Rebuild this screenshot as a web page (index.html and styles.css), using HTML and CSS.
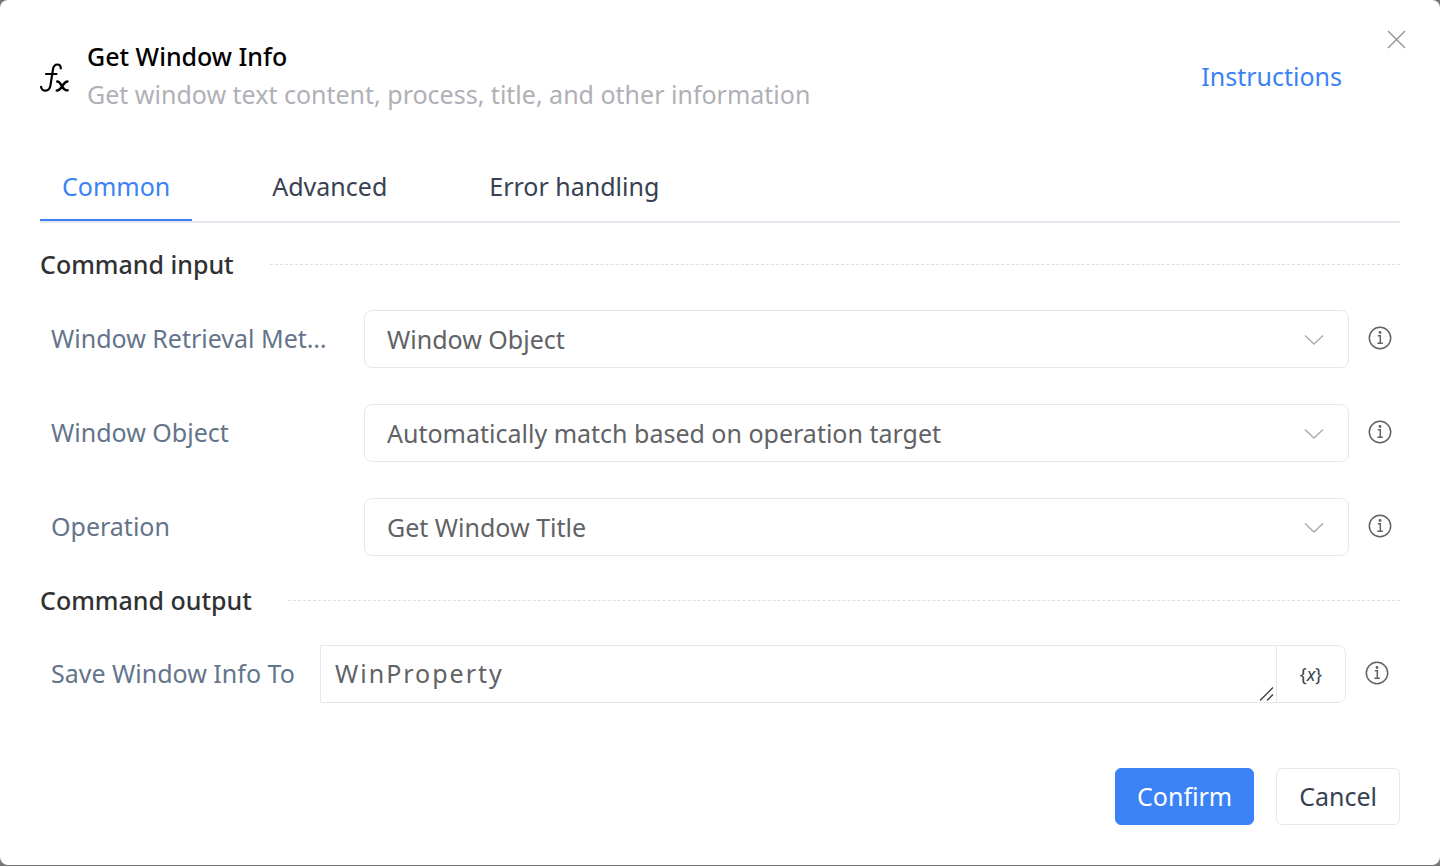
FILE: index.html
```html
<!DOCTYPE html>
<html lang="en">
<head>
<meta charset="utf-8">
<title>Get Window Info</title>
<link rel="stylesheet" href="styles.css">
</head>
<body>
<svg class="sprite" aria-hidden="true">
  <symbol id="info" viewBox="0 0 24 24">
    <g fill="none" stroke="currentColor" stroke-width="1.5">
      <circle cx="12" cy="12" r="10.7"/>
      <path d="M9.800 9.700h2.500v7.600M9.400 17.300h5.400"/>
    </g>
    <circle cx="12" cy="6.5" r="1.4" fill="currentColor"/>
  </symbol>
  <symbol id="chevron" viewBox="0 0 20 12">
    <path d="M1 1.5l9 8.5 9-8.5" fill="none" stroke="currentColor" stroke-width="1.4"/>
  </symbol>
</svg>
<main class="dialog">
  <header class="header">
    <svg class="fx" viewBox="0 0 30 30" aria-hidden="true">
      <g fill="none" stroke="currentColor" stroke-width="2.2" stroke-linecap="round" stroke-linejoin="round">
        <path d="M20.800 5.500c0-2.600-1.400-4-3.500-4-2.500 0-3.800 1.700-4.300 4.600l-2.400 15.500c-.6 4-2.300 6-5 6-2.300 0-4.100-1.300-4.500-3.800M6 11h10.500"/>
        <path d="M17.200 18.500c4.400-.3 4.600 9.500 10.300 8.800M27.400 18.600c-4.400 0-5.800 9.200-10.600 8.900" stroke-width="2.500"/>
      </g>
    </svg>
    <div class="heading">
      <h1 class="title">Get Window Info</h1>
      <p class="subtitle">Get window text content, process, title, and other information</p>
    </div>
    <a class="instructions" href="#">Instructions</a>
    <button class="close" type="button" aria-label="Close">
      <svg viewBox="0 0 20 20"><path d="M2 2l17 17M19 2L2 19" fill="none" stroke="currentColor" stroke-width="1.4"/></svg>
    </button>
  </header>

  <nav class="tabs" role="tablist">
    <button class="tab tab-active" type="button" role="tab" aria-selected="true">Common</button>
    <button class="tab" type="button" role="tab" aria-selected="false">Advanced</button>
    <button class="tab" type="button" role="tab" aria-selected="false">Error handling</button>
  </nav>

  <form class="form">
    <h2 class="section">Command input</h2>
    <div class="rows">
      <div class="row">
        <label class="label" for="method">Window Retrieval Method</label>
        <div class="picker">
          <select class="select" id="method"><option>Window Object</option></select>
          <svg class="chevron" aria-hidden="true"><use href="#chevron"/></svg>
        </div>
        <svg class="info"><use href="#info"/></svg>
      </div>
      <div class="row">
        <label class="label" for="object">Window Object</label>
        <div class="picker">
          <select class="select" id="object"><option>Automatically match based on operation target</option></select>
          <svg class="chevron" aria-hidden="true"><use href="#chevron"/></svg>
        </div>
        <svg class="info"><use href="#info"/></svg>
      </div>
      <div class="row">
        <label class="label" for="operation">Operation</label>
        <div class="picker">
          <select class="select" id="operation"><option>Get Window Title</option></select>
          <svg class="chevron" aria-hidden="true"><use href="#chevron"/></svg>
        </div>
        <svg class="info"><use href="#info"/></svg>
      </div>
    </div>
    <h2 class="section">Command output</h2>
    <div class="row row-output">
      <label class="label" for="output">Save Window Info To</label>
      <div class="variable">
        <div class="field">
          <textarea class="textarea" id="output" rows="1">WinProperty</textarea>
          <svg class="grip" viewBox="0 0 16 16" aria-hidden="true"><path d="M1 14.500L14 1.500M8 14.500l6-6" fill="none" stroke="currentColor" stroke-width="1.400"/></svg>
        </div>
        <button class="insert" type="button">{<i>x</i>}</button>
      </div>
      <svg class="info"><use href="#info"/></svg>
    </div>
    <footer class="footer">
      <button class="button button-primary" type="button">Confirm</button>
      <button class="button" type="button">Cancel</button>
    </footer>
  </form>
</main>
</body>
</html>
```
FILE: styles.css
```css
* {
  box-sizing: border-box;
}

body {
  margin: 0;
  min-height: 100vh;
  display: flex;
  padding-bottom: 1px;
  background: #767676;
  font-family: "Noto Sans", sans-serif;
  font-size: 25px;
  line-height: 38px;
  color: #374151;
}

button,
select,
textarea {
  font: inherit;
  color: inherit;
}

button {
  cursor: pointer;
}

.sprite {
  position: absolute;
  width: 0;
  height: 0;
}

.dialog {
  flex: 1;
  min-width: 0;
  padding: 37px 40px 40px;
  background: #fff;
  border-radius: 8px;
}

.header {
  display: flex;
  align-items: center;
}

.fx {
  width: 30px;
  height: 30px;
  margin: 6px 17px 0 0;
  color: #000;
}

.heading {
  flex: 1;
}

.title,
.section {
  margin: 0;
  font-size: 25px;
  font-weight: 500;
}

.title {
  color: #000;
}

.subtitle {
  margin: 0;
  color: #b0b0b6;
}

.instructions {
  margin: 2px 58px 0 0;
  color: #3b82f6;
  text-decoration: none;
}

.close {
  position: absolute;
  top: 25px;
  right: 30px;
  display: flex;
  padding: 4px;
  border: 0;
  background: none;
  color: #909399;
}

.close svg {
  width: 20px;
  height: 20px;
}

.tabs {
  display: flex;
  gap: 58px;
  margin-top: 40px;
  border-bottom: 2px solid #e4e7ed;
}

.tab {
  padding: 14px 22px;
  border: 0;
  border-bottom: 2px solid transparent;
  background: none;
}

.tab-active {
  border-color: #3b82f6;
  color: #3b82f6;
}

.section {
  display: flex;
  align-items: center;
  gap: 36px;
  margin-top: 22px;
  color: #303133;
}

.section::after {
  content: "";
  flex: 1;
  border-top: 1px dashed #dcdfe6;
}

.rows {
  display: grid;
  gap: 36px;
  margin: 27px 0 25px;
}

.row {
  display: flex;
  align-items: center;
  padding: 0 8px 0 11px;
}

.label {
  flex: none;
  width: 286px;
  margin-right: 27px;
  padding-bottom: 2px;
  overflow: hidden;
  color: #64748b;
  text-overflow: ellipsis;
  white-space: nowrap;
}

.picker {
  position: relative;
  flex: 1;
  color: #606266;
}

.select {
  display: block;
  width: 100%;
  height: 58px;
  padding: 0 60px 0 22px;
  appearance: none;
  border: 1px solid #e5e7eb;
  border-radius: 8px;
  background: #fff;
}

.chevron {
  position: absolute;
  top: 24px;
  right: 25px;
  width: 20px;
  height: 12px;
  color: #a8abb2;
  pointer-events: none;
}

.info {
  width: 24px;
  height: 24px;
  margin: 0 0 2px 19px;
  color: #606266;
}

.row-output {
  margin-top: 26px;
  padding-right: 11px;
}

.row-output .label {
  width: 247px;
  margin-right: 22px;
}

.variable {
  display: flex;
  flex: 1;
  height: 58px;
  border: 1px solid #e5e7eb;
  border-radius: 0 8px 8px 0;
}

.field {
  position: relative;
  flex: 1;
}

.textarea {
  display: block;
  width: 100%;
  height: 56px;
  padding: 8px 14px;
  border: 0;
  background: none;
  color: #606266;
  letter-spacing: 2px;
  resize: none;
  overflow: hidden;
}

.grip {
  position: absolute;
  right: 1px;
  bottom: 0;
  width: 16px;
  height: 16px;
  color: #404040;
}

.insert {
  width: 69px;
  padding: 0;
  border: 0;
  border-left: 1px solid #e5e7eb;
  background: none;
  font-size: 18px;
}

.rows + .section {
  margin-top: 0;
}

.footer {
  display: flex;
  justify-content: flex-end;
  gap: 22px;
  margin-top: 65px;
}

.button {
  height: 57px;
  padding: 0 22px 2px;
  border: 1px solid #e5e7eb;
  border-radius: 6px;
  background: #fff;
}

.button-primary {
  padding: 0 21px 2px;
  border-color: #3b82f6;
  background: #3b82f6;
  color: #fff;
}
```
